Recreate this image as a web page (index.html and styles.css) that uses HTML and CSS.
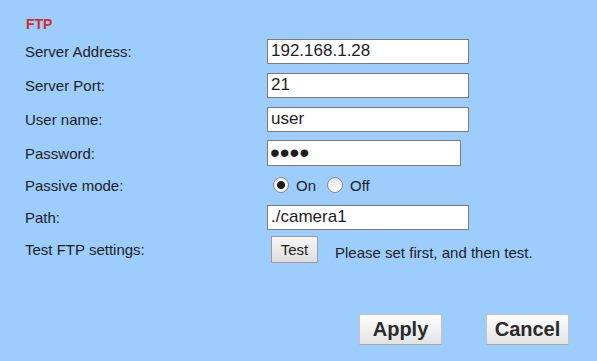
FILE: index.html
```html
<!DOCTYPE html>
<html lang="en">
<head>
    <meta charset="UTF-8">
    <meta name="viewport" content="width=device-width, initial-scale=1.0">
    <title>FTP</title>
    <link rel="stylesheet" href="styles.css">
</head>
<body>
    <div class="panel">
        <div class="title">FTP</div>
        <form id="ftpForm" class="form">
            <div class="row">
                <label for="server">Server Address:</label>
                <input type="text" id="server" class="field" value="192.168.1.28">
            </div>
            <div class="row">
                <label for="port">Server Port:</label>
                <input type="text" id="port" class="field" value="21">
            </div>
            <div class="row">
                <label for="user">User name:</label>
                <input type="text" id="user" class="field" value="user">
            </div>
            <div class="row">
                <label for="pass">Password:</label>
                <input type="password" id="pass" class="field short" value="1234">
            </div>
            <div class="row passive">
                <label>Passive mode:</label>
                <div class="radios">
                    <input type="radio" id="pasOn" name="passive" class="radio" checked>
                    <label for="pasOn" class="opt">On</label>
                    <input type="radio" id="pasOff" name="passive" class="radio">
                    <label for="pasOff" class="opt">Off</label>
                </div>
            </div>
            <div class="row">
                <label for="path">Path:</label>
                <input type="text" id="path" class="field" value="./camera1">
            </div>
            <div class="row test">
                <label>Test FTP settings:</label>
                <div class="testing">
                    <button type="button" class="small">Test</button>
                    <span class="hint">Please set first, and then test.</span>
                </div>
            </div>
        </form>
        <div class="actions">
            <button type="button" class="big">Apply</button>
            <button type="button" class="big">Cancel</button>
        </div>
    </div>
</body>
</html>
```

FILE: styles.css
```css
body {
    margin: 0;
    background-color: #9dcdfd;
    font-family: "Liberation Sans", Arial, sans-serif;
    color: #1e1e1e;
}
.panel {
    padding: 16px 0 0 25px;
}
.title {
    color: #d42c2c;
    font-size: 14px;
    font-weight: bold;
    line-height: 16px;
    margin: 0 0 2px 1px;
}
.form {
    margin: 0;
}
.row {
    display: grid;
    grid-template-columns: 242px auto;
    align-items: center;
    height: 34px;
    font-size: 15px;
}
.row.passive {
    height: 30px;
}
.row.test {
    height: 31px;
}
.field {
    box-sizing: border-box;
    width: 202px;
    height: 25px;
    margin: 0;
    padding: 0 3px;
    border: 1px solid #7b7b7b;
    background-color: white;
    font-family: "Liberation Sans", Arial, sans-serif;
    font-size: 17px;
    color: #1e1e1e;
}
.field.short {
    width: 194px;
    height: 26px;
    font-size: 28px;
    padding: 0 2px;
}
.radios {
    display: flex;
    align-items: center;
}
.radio {
    appearance: none;
    box-sizing: border-box;
    width: 16px;
    height: 16px;
    margin: 0 7px 0 6px;
    border: 1px solid #8a8a8a;
    border-radius: 50%;
    background: linear-gradient(#e6e6e6, #ffffff);
}
.radio:checked {
    background: radial-gradient(circle, #1e1e1e 0 3.5px, #f4f4f4 4.5px);
}
.radio + .opt + .radio {
    margin-left: 11px;
}
.testing {
    display: flex;
    align-items: center;
}
.small {
    box-sizing: border-box;
    width: 47px;
    height: 27px;
    margin: 0 0 0 4px;
    padding: 0;
    border: 1px solid #9a9a9a;
    background: linear-gradient(#f6f6f6, #dddddd);
    font-family: "Liberation Sans", Arial, sans-serif;
    font-size: 15px;
    color: #1e1e1e;
    cursor: pointer;
}
.hint {
    margin: 5px 0 0 17px;
}
.actions {
    display: flex;
    justify-content: flex-end;
    gap: 44px;
    margin-top: 49px;
    padding-right: 28px;
}
.big {
    box-sizing: border-box;
    width: 83px;
    height: 31px;
    padding: 0;
    border: 1px solid #c4c4c4;
    border-bottom-color: #a8a8a8;
    background: linear-gradient(#ffffff, #e2e2e2);
    font-family: "Liberation Sans", Arial, sans-serif;
    font-size: 20px;
    font-weight: bold;
    color: #2a2a2a;
    cursor: pointer;
}
```
